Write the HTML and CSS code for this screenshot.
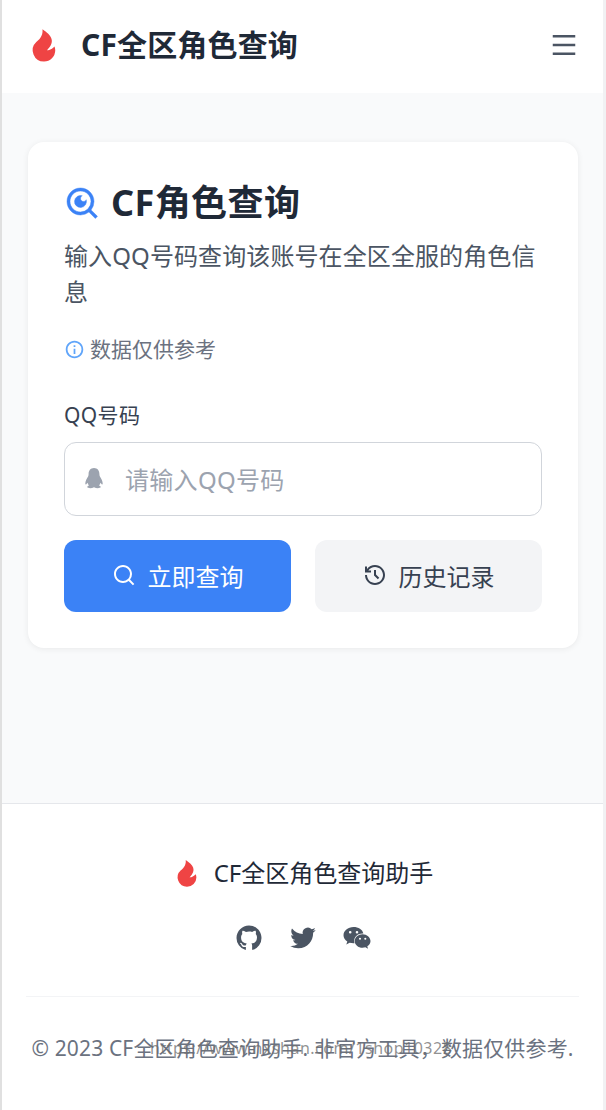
FILE: index.html
```html
<!DOCTYPE html>
<html lang="zh">
<head>
<meta charset="utf-8">
<title>CF全区角色查询</title>
<link rel="stylesheet" href="styles.css">
</head>
<body>
<div class="frame">
  <header class="topbar">
    <div class="brand">
      <svg class="flame" viewBox="0 0 24 24"><path d="M12 23a7.500 7.500 0 0 1-5.138-12.963C8.204 8.774 11.500 6.500 11 1.500c6 4 9 8 3 14 1 0 2.500 0 5-2.470.270.773.500 1.604.500 2.470A7.500 7.500 0 0 1 12 23z"/></svg>
      <span class="brand-name">CF全区角色查询</span>
    </div>
    <svg class="burger" viewBox="0 0 24 24"><path d="M3 4h18v2H3V4zm0 7h18v2H3v-2zm0 7h18v2H3v-2z"/></svg>
  </header>
  <main class="content">
    <section class="card">
      <h1 class="title">
        <svg class="title-icon" viewBox="0 0 24 24"><path d="M18.031 16.617l4.283 4.282-1.415 1.415-4.282-4.283A8.960 8.960 0 0 1 11 20c-4.968 0-9-4.032-9-9s4.032-9 9-9 9 4.032 9 9a8.960 8.960 0 0 1-1.969 5.617zm-2.006-.742A6.977 6.977 0 0 0 18 11c0-3.868-3.133-7-7-7-3.868 0-7 3.132-7 7 0 3.867 3.132 7 7 7a6.977 6.977 0 0 0 4.875-1.975l.150-.150zm-3.847-8.699a2 2 0 1 0 2.646 2.646 4 4 0 1 1-2.646-2.646z"/></svg>
        <span>CF角色查询</span>
      </h1>
      <p class="intro">输入QQ号码查询该账号在全区全服的角色信息</p>
      <p class="note">
        <svg class="note-icon" viewBox="0 0 24 24"><path d="M12 22C6.477 22 2 17.523 2 12S6.477 2 12 2s10 4.477 10 10-4.477 10-10 10zm0-2a8 8 0 1 0 0-16 8 8 0 0 0 0 16zM11 7h2v2h-2V7zm0 4h2v6h-2v-6z"/></svg>
        <span>数据仅供参考</span>
      </p>
      <label class="label" for="qq">QQ号码</label>
      <div class="field">
        <svg class="qq" viewBox="0 0 20 22"><path d="M10 1C6.400 1 4.600 3.800 4.600 7c0 .9-.1 1.700-.5 2.400C3 11.200 1.200 14 1.300 16.500c0 1 .5 1.300 1 .8.400-.4.800-1 1.200-1.500.3 1 .8 1.900 1.500 2.600-1 .4-1.900 1-1.800 1.700.1.800 1.500 1.100 3 1.100 1.300 0 2.600-.3 3.800-.9 1.200.6 2.500.9 3.800.9 1.500 0 2.900-.3 3-1.100.1-.7-.8-1.300-1.800-1.700.7-.7 1.200-1.600 1.500-2.600.4.500.8 1.100 1.200 1.500.5.500 1 .2 1-.8.100-2.500-1.700-5.300-2.800-7.100-.4-.7-.5-1.500-.5-2.400C15.400 3.800 13.600 1 10 1z"/></svg>
        <input class="input" id="qq" type="text" placeholder="请输入QQ号码">
      </div>
      <div class="actions">
        <button class="btn primary" type="button">
          <svg class="btn-icon" viewBox="0 0 24 24"><path d="M18.031 16.617l4.283 4.282-1.415 1.415-4.282-4.283A8.960 8.960 0 0 1 11 20c-4.968 0-9-4.032-9-9s4.032-9 9-9 9 4.032 9 9a8.960 8.960 0 0 1-1.969 5.617zm-2.006-.742A6.977 6.977 0 0 0 18 11c0-3.868-3.133-7-7-7-3.868 0-7 3.132-7 7 0 3.867 3.132 7 7 7a6.977 6.977 0 0 0 4.875-1.975l.150-.150z"/></svg>
          <span>立即查询</span>
        </button>
        <button class="btn secondary" type="button">
          <svg class="btn-icon" viewBox="0 0 24 24"><path d="M12 2c5.523 0 10 4.477 10 10s-4.477 10-10 10S2 17.523 2 12h2c0 4.418 3.582 8 8 8s8-3.582 8-8-3.582-8-8-8C9.250 4 6.824 5.387 5.385 7.500H8v2H2v-6h2V6c1.824-2.430 4.729-4 8-4zm1 5v4.585l3.243 3.243-1.415 1.415L11 12.413V7h2z"/></svg>
          <span>历史记录</span>
        </button>
      </div>
    </section>
  </main>
  <footer class="footer">
    <div class="foot-brand">
      <svg class="flame small" viewBox="0 0 24 24"><path d="M12 23a7.500 7.500 0 0 1-5.138-12.963C8.204 8.774 11.500 6.500 11 1.500c6 4 9 8 3 14 1 0 2.500 0 5-2.470.270.773.500 1.604.500 2.470A7.500 7.500 0 0 1 12 23z"/></svg>
      <span>CF全区角色查询助手</span>
    </div>
    <div class="socials">
      <svg class="social" viewBox="0 0 24 24"><path d="M12 2C6.475 2 2 6.475 2 12a9.994 9.994 0 0 0 6.838 9.488c.5.087.687-.213.687-.476 0-.237-.013-1.024-.013-1.862-2.512.463-3.162-.612-3.362-1.175-.113-.288-.6-1.175-1.025-1.413-.35-.187-.85-.65-.013-.662.788-.013 1.350.725 1.538 1.025.9 1.512 2.338 1.087 2.912.825.088-.65.35-1.087.638-1.337-2.225-.25-4.550-1.113-4.550-4.938 0-1.088.387-1.987 1.025-2.688-.1-.25-.45-1.275.1-2.650 0 0 .837-.262 2.750 1.026a9.280 9.280 0 0 1 2.500-.338c.85 0 1.700.112 2.500.337 1.912-1.300 2.750-1.024 2.750-1.024.55 1.375.2 2.400.1 2.650.637.700 1.025 1.587 1.025 2.687 0 3.838-2.337 4.688-4.562 4.938.362.312.675.912.675 1.850 0 1.337-.013 2.412-.013 2.750 0 .262.188.574.688.474A10.016 10.016 0 0 0 22 12c0-5.525-4.475-10-10-10z"/></svg>
      <svg class="social" viewBox="0 0 24 24"><path d="M22.162 5.656a8.384 8.384 0 0 1-2.402.658A4.196 4.196 0 0 0 21.600 4c-.82.488-1.719.83-2.656 1.015a4.182 4.182 0 0 0-7.126 3.814 11.874 11.874 0 0 1-8.620-4.370 4.168 4.168 0 0 0-.566 2.103c0 1.450.738 2.731 1.860 3.481a4.168 4.168 0 0 1-1.894-.523v.052a4.185 4.185 0 0 0 3.355 4.101 4.210 4.210 0 0 1-1.890.072A4.185 4.185 0 0 0 7.970 16.650a8.394 8.394 0 0 1-6.191 1.732 11.830 11.830 0 0 0 6.410 1.880c7.693 0 11.900-6.373 11.900-11.900 0-.18-.005-.362-.013-.54a8.496 8.496 0 0 0 2.087-2.165z"/></svg>
      <svg class="social" viewBox="-1 -3 30 30"><path d="M10.500 1C4.900 1 .5 4.700.5 9.200c0 2.600 1.400 4.700 3.800 6.300l-1 2.900 3.300-1.700c1.200.2 2.500.5 3.900.5l1 0c-.2-.7-.3-1.400-.3-2.100 0-4.200 3.600-7.500 8.200-7.500h1C19.600 3.500 15.400 1 10.500 1zM7.200 7.600a1.300 1.300 0 1 1 0-2.600 1.300 1.300 0 0 1 0 2.600zm6.800 0a1.300 1.300 0 1 1 0-2.600 1.300 1.300 0 0 1 0 2.600z"/><path d="M27.500 15c0-3.700-3.700-6.800-7.900-6.800-4.400 0-7.900 3-7.900 6.800s3.500 6.800 7.900 6.800c.9 0 1.900-.2 2.800-.5l2.600 1.400-.7-2.400c2.100-1.400 3.200-3.200 3.200-5.300zM17 13.800a1.050 1.050 0 1 1 0-2.100 1.050 1.050 0 0 1 0 2.100zm5.300 0a1.050 1.050 0 1 1 0-2.100 1.050 1.050 0 0 1 0 2.100z"/></svg>
    </div>
    <div class="copy">
      <span>© 2023 CF全区角色查询助手. 非官方工具，数据仅供参考.</span>
      <span class="watermark">https://www.nxshan.com/1shop10328</span>
    </div>
  </footer>
</div>
</body>
</html>
```
FILE: styles.css
```css
* { box-sizing: border-box; }
html, body { margin: 0; padding: 0; }
body {
  width: 606px;
  height: 1110px;
  overflow: hidden;
  background: #fff;
  font-family: "Noto Sans", "Noto Sans CJK SC", sans-serif;
  color: #1f2937;
}
.frame {
  height: 1110px;
  display: flex;
  flex-direction: column;
  border-left: 2px solid #e0e0e0;
  border-right: 3px solid #f1f1f3;
}
.topbar {
  height: 93px;
  flex: none;
  padding: 0 24px 3px;
  display: flex;
  align-items: center;
  justify-content: space-between;
  background: #fff;
}
.brand { display: flex; align-items: center; gap: 19px; }
.flame { width: 36px; height: 36px; fill: #ef4444; display: block; }
.flame.small { width: 30px; height: 30px; }
.brand-name { font-size: 30px; font-weight: 700; line-height: 36px; letter-spacing: .15px; color: #1f2937; }
.burger { width: 30px; height: 30px; fill: #4b5563; display: block; }
.content { flex: 1; background: #f9fafb; padding: 49px 25px 0 26px; }
.card {
  background: #fff;
  border-radius: 16px;
  padding: 36px;
  box-shadow: 0 1px 6px rgba(0, 0, 0, .07);
}
.title { margin: 0; display: flex; align-items: center; gap: 11px; font-size: 36px; line-height: 50px; font-weight: 700; letter-spacing: .4px; color: #1f2937; }
.title-icon { width: 36px; height: 36px; fill: #3b82f6; stroke: #3b82f6; stroke-width: .3; display: block; }
.intro { margin: 10px 0 0; font-size: 24px; line-height: 36px; letter-spacing: .1px; color: #4b5563; }
.note { margin: 24px 0 0; display: flex; align-items: center; gap: 5px; font-size: 21px; line-height: 31px; color: #6b7280; }
.note-icon { width: 21px; height: 21px; fill: #60a5fa; display: block; }
.label { display: block; margin-top: 35px; font-size: 21px; line-height: 31px; letter-spacing: .4px; color: #374151; }
.field { position: relative; margin-top: 11px; }
.qq { position: absolute; left: 20px; top: 25px; width: 20px; height: 22px; fill: #9ca3af; }
.input {
  display: block;
  width: 100%;
  height: 74px;
  padding: 0 16px 0 60px;
  border: 1px solid #d1d5db;
  border-radius: 12px;
  font: inherit;
  font-size: 24px;
  letter-spacing: .3px;
  color: #1f2937;
  background: #fff;
  outline: none;
}
.input::placeholder { color: #9ca3af; opacity: 1; }
.actions { margin-top: 24px; display: grid; grid-template-columns: 1fr 1fr; gap: 24px; }
.btn {
  height: 72px;
  padding: 0 0 2px;
  border: 0;
  border-radius: 12px;
  display: flex;
  align-items: center;
  justify-content: center;
  gap: 12px;
  font: inherit;
  font-size: 24px;
}
.primary { background: #3b82f6; color: #fff; }
.primary .btn-icon { fill: #fff; }
.secondary { background: #f3f4f6; color: #374151; }
.secondary .btn-icon { fill: #374151; }
.btn-icon { width: 24px; height: 24px; display: block; }
.footer { flex: none; height: 307px; border-top: 1px solid #e5e7eb; background: #fff; padding: 47px 24px 0; }
.foot-brand { display: flex; justify-content: center; align-items: center; gap: 12px; font-size: 24px; line-height: 44px; color: #1f2937; }
.socials { margin-top: 28px; display: flex; justify-content: center; align-items: center; gap: 24px; }
.social { width: 30px; height: 30px; fill: #4b5563; display: block; }
.copy { position: relative; margin-top: 43px; border-top: 1px solid #f3f4f6; padding-top: 32px; text-align: center; font-size: 21px; line-height: 38px; letter-spacing: .15px; color: #6b7280; white-space: nowrap; }
.watermark { position: absolute; left: 124px; top: 41px; font-size: 16px; line-height: 20px; letter-spacing: .5px; color: rgba(110, 110, 110, .75); }
```
